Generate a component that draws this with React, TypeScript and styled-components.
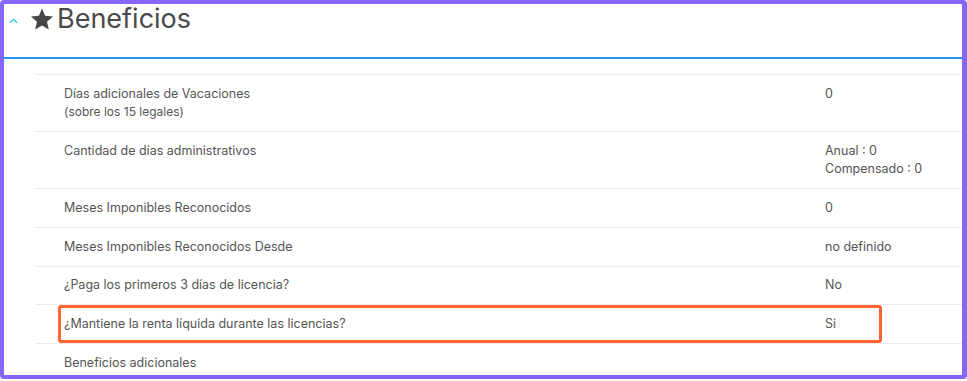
import React from 'react'
import styled, { createGlobalStyle } from 'styled-components'

const Global = createGlobalStyle`
  html, body {
    margin: 0;
    padding: 0;
    background: #ffffff;
  }
  body {
    font-family: Inter, "Noto Sans", sans-serif;
    color: #555;
  }
`

interface Row {
  label: string
  note?: string
  values: string[]
  highlight?: boolean
}

const rows: Row[] = [
  { label: 'Días adicionales de Vacaciones', note: '(sobre los 15 legales)', values: ['0'] },
  { label: 'Cantidad de días administrativos', values: ['Anual : 0', 'Compensado : 0'] },
  { label: 'Meses Imponibles Reconocidos', values: ['0'] },
  { label: 'Meses Imponibles Reconocidos Desde', values: ['no definido'] },
  { label: '¿Paga los primeros 3 días de licencia?', values: ['No'] },
  { label: '¿Mantiene la renta líquida durante las licencias?', values: ['Si'], highlight: true },
  { label: 'Beneficios adicionales', values: [] },
]

export default function App() {
  return (
    <>
      <Global />
      <S.Frame>
        <S.Header>
          <S.Chevron viewBox="0 0 10 6">
            <path d="M1 5 L5 1.2 L9 5" fill="none" stroke="#20c4dc" strokeWidth="1.4" />
          </S.Chevron>
          <S.Star viewBox="0 0 24 24">
            <path d="M12 1.5l3.1 7.3 7.9.7-6 5.2 1.8 7.8L12 18.4l-6.8 4.1L7 14.7 1 9.5l7.9-.7z" fill="#464646" />
          </S.Star>
          <S.Title>Beneficios</S.Title>
        </S.Header>
        <S.Rule />
        <S.List>
          {rows.map((r, i) => (
            <S.Row key={i}>
              <S.Label>
                <div>{r.label}</div>
                {r.note && <S.Note>{r.note}</S.Note>}
              </S.Label>
              <S.Value>
                {r.values.map((v, j) => <div key={j}>{v}</div>)}
              </S.Value>
              {r.highlight && <S.Highlight />}
            </S.Row>
          ))}
        </S.List>
      </S.Frame>
    </>
  )
}

const S = {
  Frame: styled.div`
    box-sizing: border-box;
    width: 967px;
    height: 379px;
    border: 4px solid #8466fb;
    border-right-width: 5px;
    border-radius: 4px;
    overflow: hidden;
    background: #fff;
  `,
  Header: styled.div`
    height: 53px;
    display: flex;
    align-items: flex-start;
    padding-left: 5px;
  `,
  Chevron: styled.svg`
    width: 9px;
    height: 6px;
    margin-top: 14px;
  `,
  Star: styled.svg`
    width: 24px;
    height: 24px;
    margin-left: 12px;
    margin-top: 3px;
  `,
  Title: styled.h1`
    margin: 0 0 0 3px;
    font-size: 27px;
    line-height: 30px;
    font-weight: 400;
    color: #4a4a4a;
  `,
  Rule: styled.div`
    height: 2px;
    background: #2196f3;
  `,
  List: styled.div`
    margin: 15px 0 0 31px;
  `,
  Row: styled.div`
    position: relative;
    display: grid;
    grid-template-columns: 761px 1fr;
    border-top: 1px solid #ececec;
    padding: 9.75px 0 9.75px 29px;
    font-size: 12.5px;
    line-height: 18.25px;
    color: #555;
  `,
  Label: styled.div``,
  Note: styled.div`
    font-size: 12px;
  `,
  Value: styled.div``,
  Highlight: styled.div`
    position: absolute;
    left: 23px;
    top: 0;
    width: 824px;
    height: 38px;
    box-sizing: border-box;
    border: 3px solid #ff6633;
    border-radius: 3px;
  `,
}
